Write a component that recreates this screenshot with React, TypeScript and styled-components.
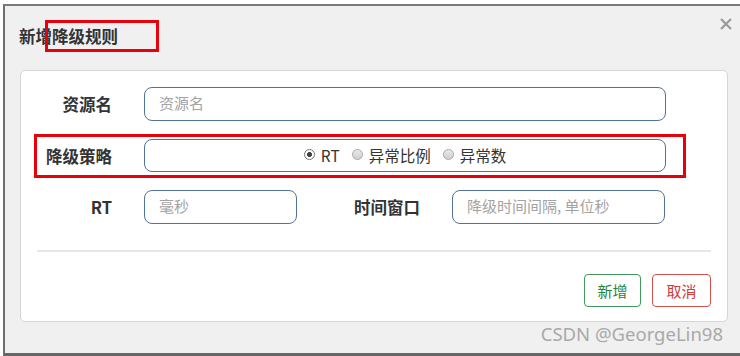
import styled, { createGlobalStyle } from "styled-components";

const GlobalStyle = createGlobalStyle`
  html, body {
    margin: 0;
    padding: 0;
    background: #fff;
  }
  body {
    width: 740px;
    height: 356px;
    overflow: hidden;
    font-family: "Noto Sans CJK SC", "Noto Sans", sans-serif;
  }
`;

const Screen = styled.div`
  width: 740px;
  height: 356px;
  padding: 4px 0 0 3px;
  box-sizing: border-box;
  background: #fff;
`;

const Dialog = styled.div`
  height: 352px;
  box-sizing: border-box;
  background: #f0f0f0;
  border-top: 2px solid #7b7b7b;
  border-left: 2px solid #6e6e6e;
  border-bottom: 3px solid #666;
  display: flex;
  flex-direction: column;
`;

const Header = styled.div`
  position: relative;
  height: 64px;
  display: flex;
  justify-content: space-between;
  padding: 0 8px 0 14px;
`;

const Title = styled.h4`
  margin: 0;
  align-self: center;
  padding-bottom: 4px;
  font-size: 16.5px;
  font-weight: 700;
  color: #333;
  line-height: 24px;
`;

const CloseButton = styled.button`
  margin-top: 12px;
  width: 12px;
  height: 12px;
  padding: 0;
  border: 0;
  background: transparent;
  cursor: pointer;
  display: flex;
`;

const Highlight = styled.span<{ $left: number; $top: number; $w: number; $h: number }>`
  position: absolute;
  left: ${(p) => p.$left}px;
  top: ${(p) => p.$top}px;
  width: ${(p) => p.$w}px;
  height: ${(p) => p.$h}px;
  box-sizing: border-box;
  border: 3px solid #e8000b;
  pointer-events: none;
`;

const Card = styled.div`
  margin: 0 12px 0 15px;
  background: #fff;
  border: 1px solid #d6d6d6;
  border-radius: 5px;
  padding: 16px 0 14px;
  display: flex;
  flex-direction: column;
`;

const Form = styled.div`
  display: flex;
  flex-direction: column;
  gap: 18px;
`;

const Row = styled.div`
  position: relative;
  display: flex;
  align-items: center;
`;

const Label = styled.label<{ $w: number }>`
  width: ${(p) => p.$w}px;
  flex: none;
  text-align: right;
  margin-right: 32px;
  font-size: 16.5px;
  font-weight: 700;
  color: #333;
  white-space: nowrap;
`;

const TextInput = styled.input<{ $w: number }>`
  width: ${(p) => p.$w}px;
  height: 34px;
  box-sizing: border-box;
  padding: 0 14px 4px;
  border: 1.5px solid #4f7399;
  border-radius: 8px;
  font-family: "Noto Sans CJK SC", "Noto Sans", sans-serif;
  font-size: 15px;
  color: #333;
  outline: none;
  background: #fff;
  &::placeholder {
    color: #a3a3a3;
  }
`;

const RadioBox = styled.div`
  width: 522px;
  height: 33px;
  box-sizing: border-box;
  border: 1.5px solid #4f7399;
  border-radius: 8px;
  display: flex;
  align-items: center;
  justify-content: center;
  gap: 12px;
  padding-bottom: 2px;
`;

const RadioItem = styled.label`
  display: flex;
  align-items: center;
  gap: 6px;
  font-size: 15.5px;
  color: #333;
`;

const RadioMark = styled.span<{ $checked?: boolean }>`
  width: 11px;
  height: 11px;
  box-sizing: border-box;
  border-radius: 50%;
  border: 1px solid ${(p) => (p.$checked ? "#777" : "#a8a8a8")};
  background: ${(p) =>
    p.$checked
      ? "radial-gradient(circle, #444 0 2.2px, #fff 2.6px)"
      : "linear-gradient(#e9e9e9, #cfcfcf)"};
`;

const Divider = styled.div`
  height: 1.5px;
  background: #e7e7e7;
  margin: 26px 16px 0;
`;

const Actions = styled.div`
  display: flex;
  justify-content: flex-end;
  gap: 11px;
  margin: 22px 16px 0;
`;

const ActionButton = styled.button<{ $tone: "ok" | "cancel" }>`
  height: 33px;
  width: ${(p) => (p.$tone === "ok" ? 57 : 59)}px;
  box-sizing: border-box;
  background: #fff;
  border-radius: 4px;
  border: 1.5px solid ${(p) => (p.$tone === "ok" ? "#3f9a5c" : "#d3514d")};
  color: ${(p) => (p.$tone === "ok" ? "#24853a" : "#cf3b36")};
  font-family: "Noto Sans CJK SC", "Noto Sans", sans-serif;
  font-size: 15px;
  padding: 0;
  cursor: pointer;
`;

const Footer = styled.div`
  flex: 1;
  display: flex;
  justify-content: flex-end;
  align-items: flex-start;
  padding: 1px 17px 0 0;
`;

const Watermark = styled.span`
  font-family: "Noto Sans", "DejaVu Sans", sans-serif;
  font-size: 18.5px;
  line-height: 22px;
  color: #a9a9a9;
`;

export default function App() {
  return (
    <>
      <GlobalStyle />
      <Screen>
        <Dialog>
          <Header>
            <Title>新增降级规则</Title>
            <CloseButton aria-label="close">
              <svg width="12" height="12" viewBox="0 0 12 12">
                <path d="M1 1 L11 11 M11 1 L1 11" stroke="#9a9a9a" strokeWidth="2.2" />
              </svg>
            </CloseButton>
            <Highlight $left={40} $top={14} $w={114} $h={32} />
          </Header>

          <Card>
            <Form>
              <Row>
                <Label $w={91}>资源名</Label>
                <TextInput $w={522} placeholder="资源名" />
              </Row>
              <Row>
                <Label $w={91}>降级策略</Label>
                <RadioBox>
                  <RadioItem>
                    <RadioMark $checked />
                    RT
                  </RadioItem>
                  <RadioItem>
                    <RadioMark />
                    异常比例
                  </RadioItem>
                  <RadioItem>
                    <RadioMark />
                    异常数
                  </RadioItem>
                </RadioBox>
                <Highlight $left={13} $top={-5} $w={652} $h={44} />
              </Row>
              <Row>
                <Label $w={91}>RT</Label>
                <TextInput $w={153} placeholder="毫秒" />
                <Label $w={123}>时间窗口</Label>
                <TextInput $w={213} placeholder="降级时间间隔, 单位秒" />
              </Row>
            </Form>
            <Divider />
            <Actions>
              <ActionButton $tone="ok">新增</ActionButton>
              <ActionButton $tone="cancel">取消</ActionButton>
            </Actions>
          </Card>

          <Footer>
            <Watermark>CSDN @GeorgeLin98</Watermark>
          </Footer>
        </Dialog>
      </Screen>
    </>
  );
}
